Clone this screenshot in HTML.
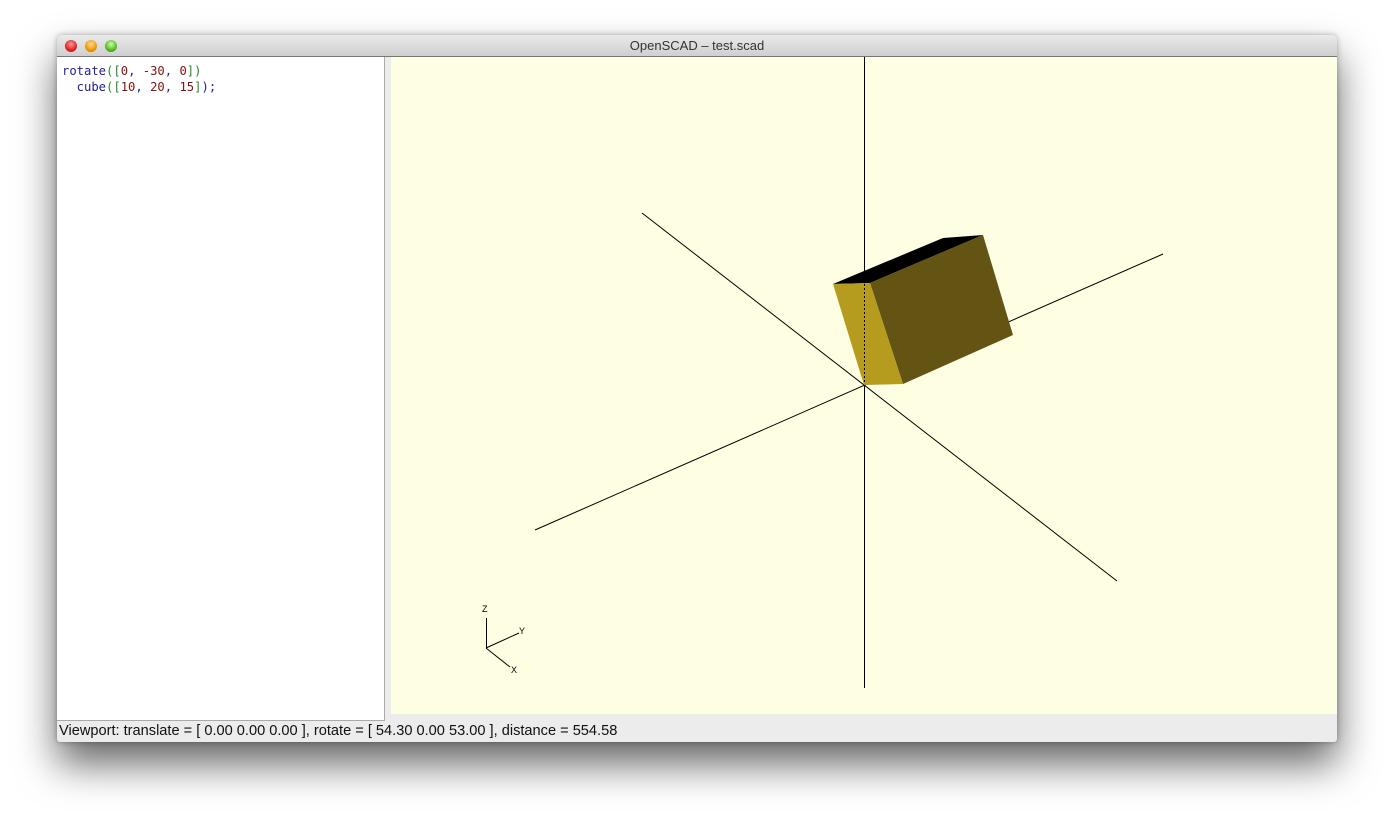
<!DOCTYPE html>
<html><head><style>
body{margin:0;width:1394px;height:821px;background:#fff;position:relative;overflow:hidden;font-family:"Liberation Sans",sans-serif}
#win{position:absolute;left:57px;top:35px;width:1280px;height:707px;border-radius:5px 5px 3px 3px;box-shadow:0 22px 40px rgba(0,0,0,.6),0 0 6px rgba(0,0,0,.3);background:#ececec;overflow:hidden}
#title{position:absolute;left:0;top:0;width:1280px;height:21px;background:linear-gradient(#eaeaea,#cfcfcf);border-bottom:1px solid #777;text-align:center;font-size:13px;line-height:22px;color:#333}
.dot{position:absolute;top:5px;width:12px;height:12px;border-radius:50%}
#ed{position:absolute;left:0;top:22px;width:327px;height:663px;background:#fff;border-right:1px solid #aaa;border-bottom:1px solid #aaa}
#code{position:absolute;left:5px;top:6px;font-family:"DejaVu Sans Mono","Liberation Mono",monospace;font-size:12.2px;line-height:16px;white-space:pre;color:#21219a}
.g{color:#2a8a2a}.r{color:#8a1010}
#status{position:absolute;left:2px;top:688px;font-size:14.6px;color:#111}
</style></head><body>
<div id="win">
<div id="title">OpenSCAD – test.scad
<div class="dot" style="left:8px;background:radial-gradient(circle at 50% 35%,#f99,#d22 60%,#922)"></div>
<div class="dot" style="left:28px;background:radial-gradient(circle at 50% 35%,#fd9,#e90 60%,#a60)"></div>
<div class="dot" style="left:48px;background:radial-gradient(circle at 50% 35%,#cfa,#5b2 60%,#371)"></div>
</div>
<div id="ed"><div id="code">rotate<span class="g">([</span><span class="r">0</span>, <span class="r">-30</span>, <span class="r">0</span><span class="g">])</span>
  cube<span class="g">([</span><span class="r">10</span>, <span class="r">20</span>, <span class="r">15</span><span class="g">]</span>);</div></div>
<svg style="position:absolute;left:334px;top:22px" width="946" height="657" viewBox="391 57 946 657">
<rect x="391" y="57" width="946" height="657" fill="#fefee2"/>
<g stroke="#000" stroke-width="1" fill="none">
<line x1="864.5" y1="57" x2="864.5" y2="688"/>
<line x1="642" y1="213" x2="1117" y2="581"/>
<line x1="535" y1="530" x2="1163" y2="254"/>
</g>
<polygon points="833,284 943,238 983,235 870,283" fill="#000"/>
<polygon points="870,283 983,235 1013,335 903,384" fill="#635413"/>
<polygon points="833,284 870,283 903,384 864,385" fill="#b59c1f"/>
<line x1="864.5" y1="284" x2="864.5" y2="384" stroke="#000" stroke-dasharray="2,2"/>
<g stroke="#000" stroke-width="1">
<line x1="486.5" y1="648" x2="486.5" y2="618"/>
<line x1="486" y1="648" x2="519" y2="633"/>
<line x1="486" y1="648" x2="510" y2="667"/>
</g>
<g font-size="9" font-family="Liberation Sans" fill="#000">
<text x="482" y="612">Z</text><text x="519" y="634">Y</text><text x="511" y="673">X</text>
</g>
</svg>
<div id="status">Viewport: translate = [ 0.00 0.00 0.00 ], rotate = [ 54.30 0.00 53.00 ], distance = 554.58</div>
</div>
</body></html>
